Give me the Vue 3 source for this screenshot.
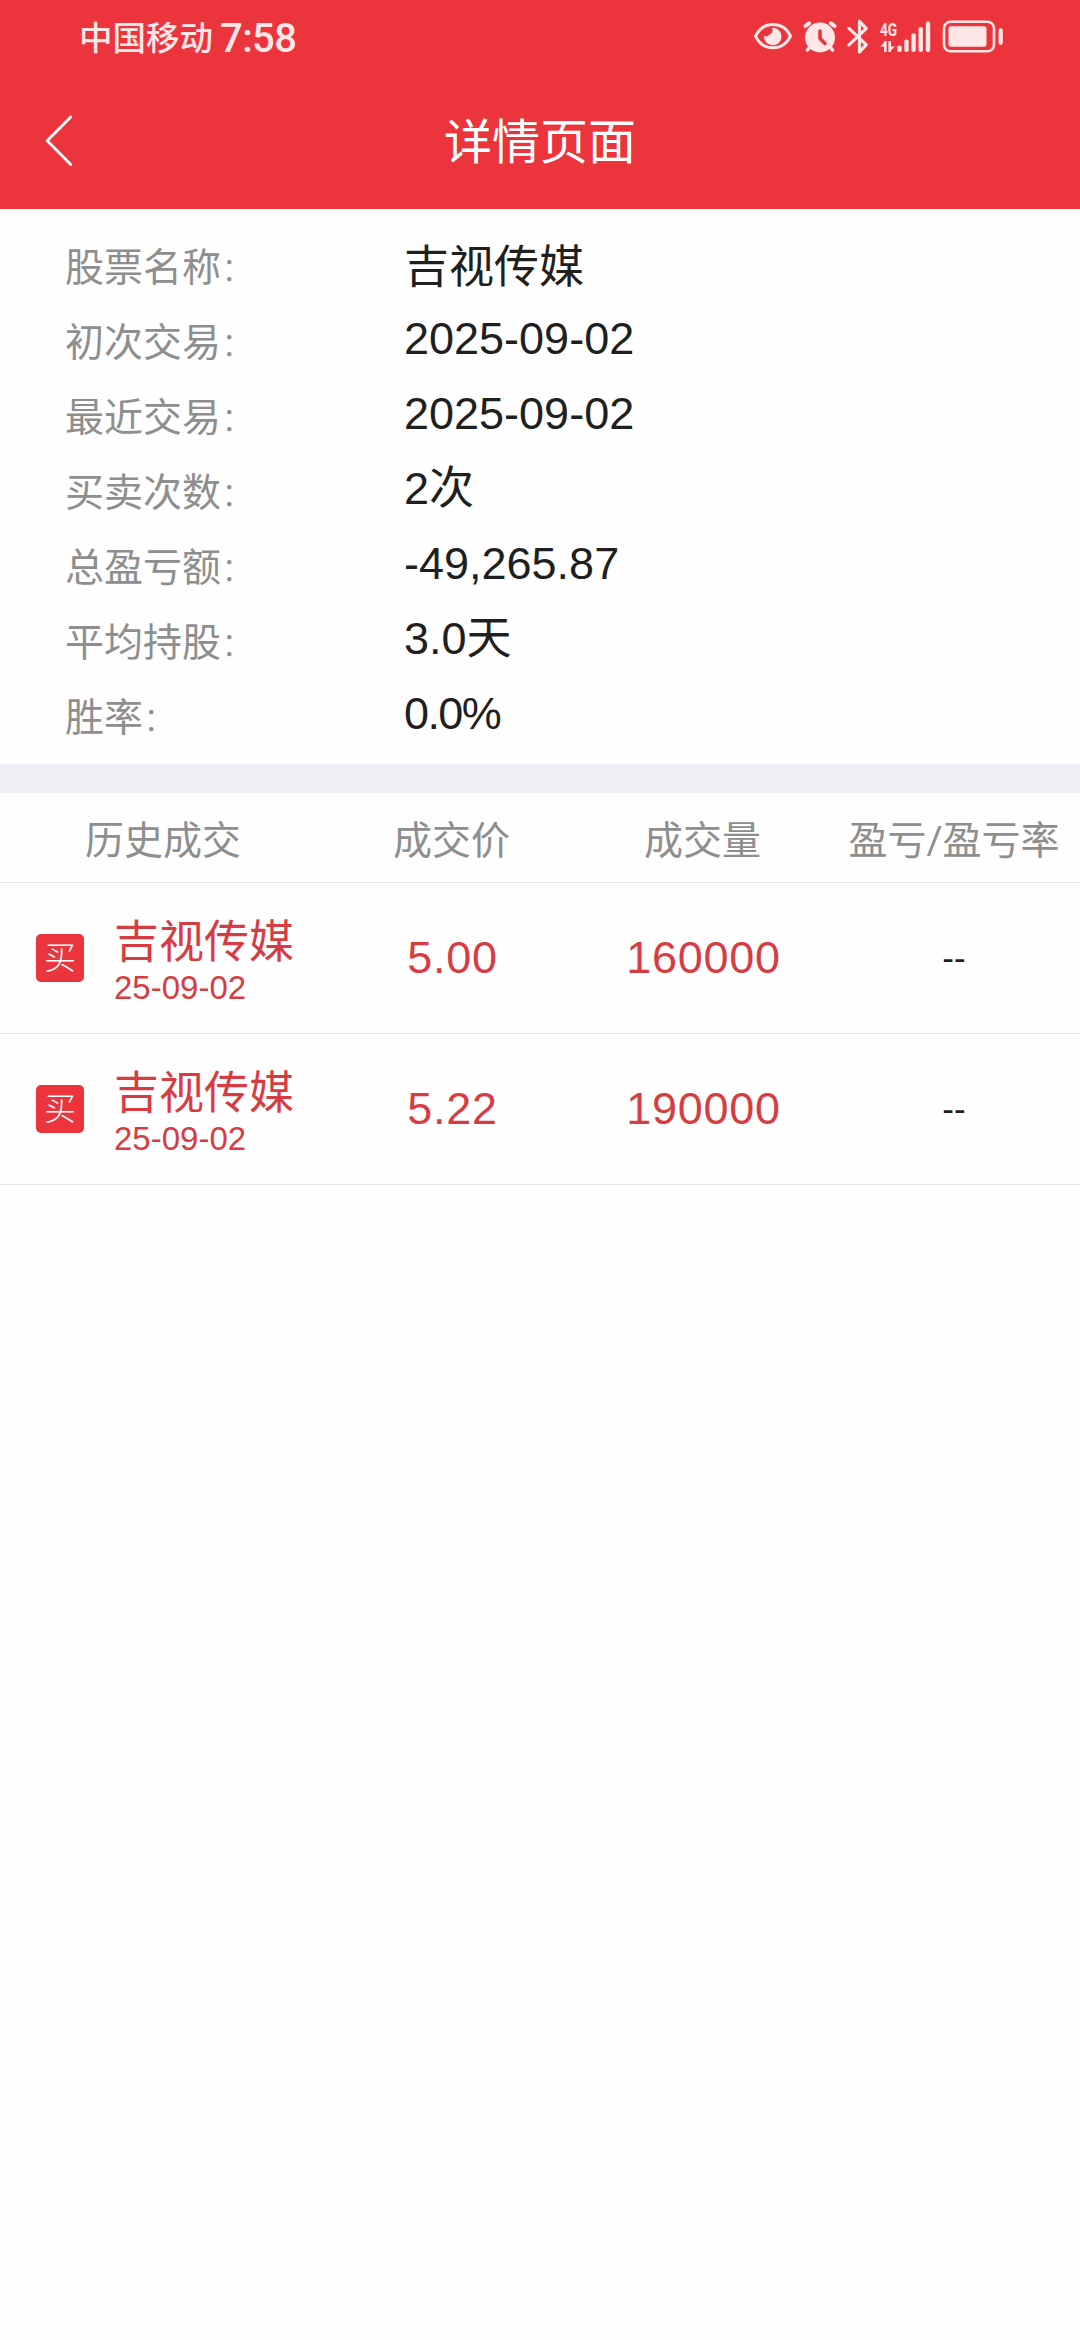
<template>
  <div class="page">
    <header class="top">
      <div class="status-bar">
        <div class="status-left">
          <span class="carrier">中国移动</span>
          <span class="time">7:58</span>
        </div>
        <div class="status-icons">
          <svg class="icon-eye" viewBox="0 0 40 36" width="40" height="36">
            <path d="M2.5 17.2 C10 1.7 30 1.7 37.5 17.2 C30 32.7 10 32.7 2.5 17.2 Z" fill="none" stroke="currentColor" stroke-width="3" stroke-linejoin="round" />
            <path d="M19 8.8 A8.8 8.8 0 1 1 11 16.5 A3.5 3.5 0 0 0 15.8 16 A5 5 0 0 0 19 8.8 Z" fill="currentColor" />
          </svg>
          <svg class="icon-alarm" viewBox="0 0 34 36" width="34" height="36">
            <circle cx="17" cy="18.5" r="15" fill="currentColor" />
            <path d="M2.5 7 L6 4.3 M31.5 7 L28 4.3" fill="none" stroke="currentColor" stroke-width="4" stroke-linecap="round" />
            <path d="M6.5 28.5 L4.5 31 M27.5 28.5 L29.5 31" fill="none" stroke="currentColor" stroke-width="3.6" stroke-linecap="round" />
            <path d="M17 12 V19.5 L22 24.5" fill="none" stroke="#eb343b" stroke-width="3.6" stroke-linecap="round" stroke-linejoin="round" />
          </svg>
          <svg class="icon-bluetooth" viewBox="0 0 22 36" width="22" height="36">
            <path d="M2 9.4 L19.2 25.6 L12.5 33 V2.2 L19.2 9.6 L2 25.8" fill="none" stroke="currentColor" stroke-width="3.2" stroke-linecap="round" stroke-linejoin="round" />
          </svg>
          <div class="network">
            <span class="network-type">4G</span>
            <svg class="icon-data" viewBox="0 0 15 11" width="15" height="11">
              <path d="M5.3 0 V11 M9.7 0 V11" stroke="currentColor" stroke-width="2.6" />
              <path d="M5.5 0 L0.3 5.5 H5.5 Z M9.5 11 L14.8 5.5 H9.5 Z" fill="currentColor" />
            </svg>
          </div>
          <svg class="icon-signal" viewBox="0 0 34 32" width="34" height="32">
            <rect v-for="bar in signalBars" :key="bar.x" :x="bar.x" :y="31 - bar.height" width="4.4" :height="bar.height" rx="2" fill="currentColor" />
          </svg>
          <svg class="icon-battery" viewBox="0 0 62 34" width="62" height="34">
            <rect x="2" y="1.7" width="50" height="29.6" rx="6.5" fill="none" stroke="currentColor" stroke-width="2.6" />
            <rect x="6.5" y="6.2" width="38" height="20.6" rx="2.5" fill="currentColor" />
            <rect x="56.6" y="8.3" width="4.2" height="16.6" rx="2.1" fill="currentColor" />
          </svg>
        </div>
      </div>
      <div class="nav-bar">
        <svg class="back" viewBox="0 0 30 54" width="30" height="54">
          <path d="M26.8 2 L3.2 25.7 L26.8 49.5" fill="none" stroke="#fff" stroke-width="2.8" stroke-linecap="round" stroke-linejoin="round" />
        </svg>
        <h1 class="title">详情页面</h1>
      </div>
    </header>

    <dl class="summary">
      <div v-for="item in summary" :key="item.label" class="summary-row">
        <dt>{{ item.label }}<span class="colon">：</span></dt>
        <dd :class="item.type">{{ item.value }}</dd>
      </div>
    </dl>

    <section class="history">
      <div class="history-head">
        <span v-for="col in columns" :key="col">{{ col }}</span>
      </div>
      <div v-for="trade in trades" :key="trade.id" class="history-row">
        <div class="stock">
          <span class="badge">{{ trade.side }}</span>
          <div class="stock-text">
            <span class="stock-name">{{ trade.name }}</span>
            <span class="stock-date">{{ trade.date }}</span>
          </div>
        </div>
        <span class="number">{{ trade.price }}</span>
        <span class="number">{{ trade.volume }}</span>
        <span class="profit">{{ trade.profit }}</span>
      </div>
    </section>
  </div>
</template>

<script setup>
const signalBars = [
  { x: 0.3, height: 6.5 },
  { x: 7.3, height: 12.5 },
  { x: 14.4, height: 18.8 },
  { x: 21.5, height: 25 },
  { x: 28.8, height: 30.5 }
]

const summary = [
  { label: '股票名称', value: '吉视传媒', type: 'name' },
  { label: '初次交易', value: '2025-09-02' },
  { label: '最近交易', value: '2025-09-02' },
  { label: '买卖次数', value: '2次' },
  { label: '总盈亏额', value: '-49,265.87' },
  { label: '平均持股', value: '3.0天' },
  { label: '胜率', value: '0.0%', type: 'percent' }
]

const columns = ['历史成交', '成交价', '成交量', '盈亏/盈亏率']

const trades = [
  { id: 1, side: '买', name: '吉视传媒', date: '25-09-02', price: '5.00', volume: '160000', profit: '--' },
  { id: 2, side: '买', name: '吉视传媒', date: '25-09-02', price: '5.22', volume: '190000', profit: '--' }
]
</script>

<style>
body {
  margin: 0;
  background: #fefefe;
}
</style>

<style scoped>
.page {
  width: 1080px;
  min-height: 2340px;
  background: #fefefe;
  color: #1f1f1f;
  font-family: "Liberation Sans", "Noto Sans CJK SC", sans-serif;
}

.top {
  height: 209px;
  background: #eb343b;
}

.status-bar {
  height: 74px;
  padding: 0 76px 0 79px;
  display: flex;
  justify-content: space-between;
  align-items: center;
  color: #ffe6e7;
}

.status-left {
  display: flex;
  align-items: center;
  gap: 7px;
  padding-top: 3px;
  line-height: 74px;
  font-family: Roboto, "Noto Sans CJK SC", sans-serif;
  font-weight: 500;
}

.carrier {
  font-size: 33.5px;
}

.time {
  font-size: 40px;
  letter-spacing: -0.6px;
}

.status-icons {
  display: flex;
  align-items: center;
}

.icon-alarm {
  margin-left: 10px;
}

.icon-bluetooth {
  margin-left: 10px;
}

.network {
  margin-left: 11px;
  width: 18px;
  height: 30px;
  display: flex;
  flex-direction: column;
  justify-content: space-between;
}

.network-type {
  font-family: Roboto, sans-serif;
  font-size: 19px;
  font-weight: 700;
  line-height: 16px;
  transform: scaleX(0.72);
  transform-origin: left;
}

.icon-signal {
  margin-left: -1px;
}

.icon-battery {
  margin-left: 11px;
}

.nav-bar {
  height: 135px;
  padding: 0 44px;
  display: grid;
  grid-template-columns: 30px 1fr 30px;
  align-items: center;
}

.title {
  margin: 0;
  padding-top: 3px;
  color: #fff;
  font-size: 48px;
  font-weight: 400;
  line-height: 70px;
  text-align: center;
}

.summary {
  margin: 0;
  height: 525px;
  padding: 30px 0 0 65px;
  border-bottom: 29px solid #efeef4;
}

.summary-row {
  height: 75px;
  display: grid;
  grid-template-columns: 339px 1fr;
}

.summary dt {
  color: #8e8e8e;
  font-size: 39px;
  line-height: 58px;
}

.colon {
  font-size: 33px;
  font-weight: 300;
}

.summary dd {
  margin: 0;
  font-size: 45px;
  line-height: 50px;
}

.summary dd.name {
  line-height: 58px;
}

.summary dd.percent {
  letter-spacing: -1.6px;
}

.history-head,
.history-row {
  display: grid;
  grid-template-columns: 326px 251px 251px 252px;
  align-items: center;
  border-bottom: 1px solid #e5e5e5;
  text-align: center;
}

.history-head {
  height: 87px;
  padding-bottom: 2px;
  color: #8e8e8e;
  font-family: Roboto, "Noto Sans CJK SC", sans-serif;
  font-size: 39px;
}

.history-row {
  height: 150px;
  color: #d63d43;
}

.stock {
  display: flex;
  align-items: center;
  padding-left: 36px;
}

.badge {
  width: 48px;
  height: 48px;
  border-radius: 5px;
  background: #eb343b;
  color: #fff;
  font-size: 32px;
  font-weight: 300;
  line-height: 49px;
}

.stock-text {
  margin-left: 30px;
  padding-top: 6px;
  display: flex;
  flex-direction: column;
  text-align: left;
}

.stock-name {
  font-size: 45px;
  line-height: 54px;
}

.stock-date {
  font-size: 33px;
  line-height: 36px;
}

.number {
  padding-left: 2px;
  font-size: 45px;
  letter-spacing: 0.7px;
}

.profit {
  color: #1f1f1f;
  font-size: 35px;
}
</style>
